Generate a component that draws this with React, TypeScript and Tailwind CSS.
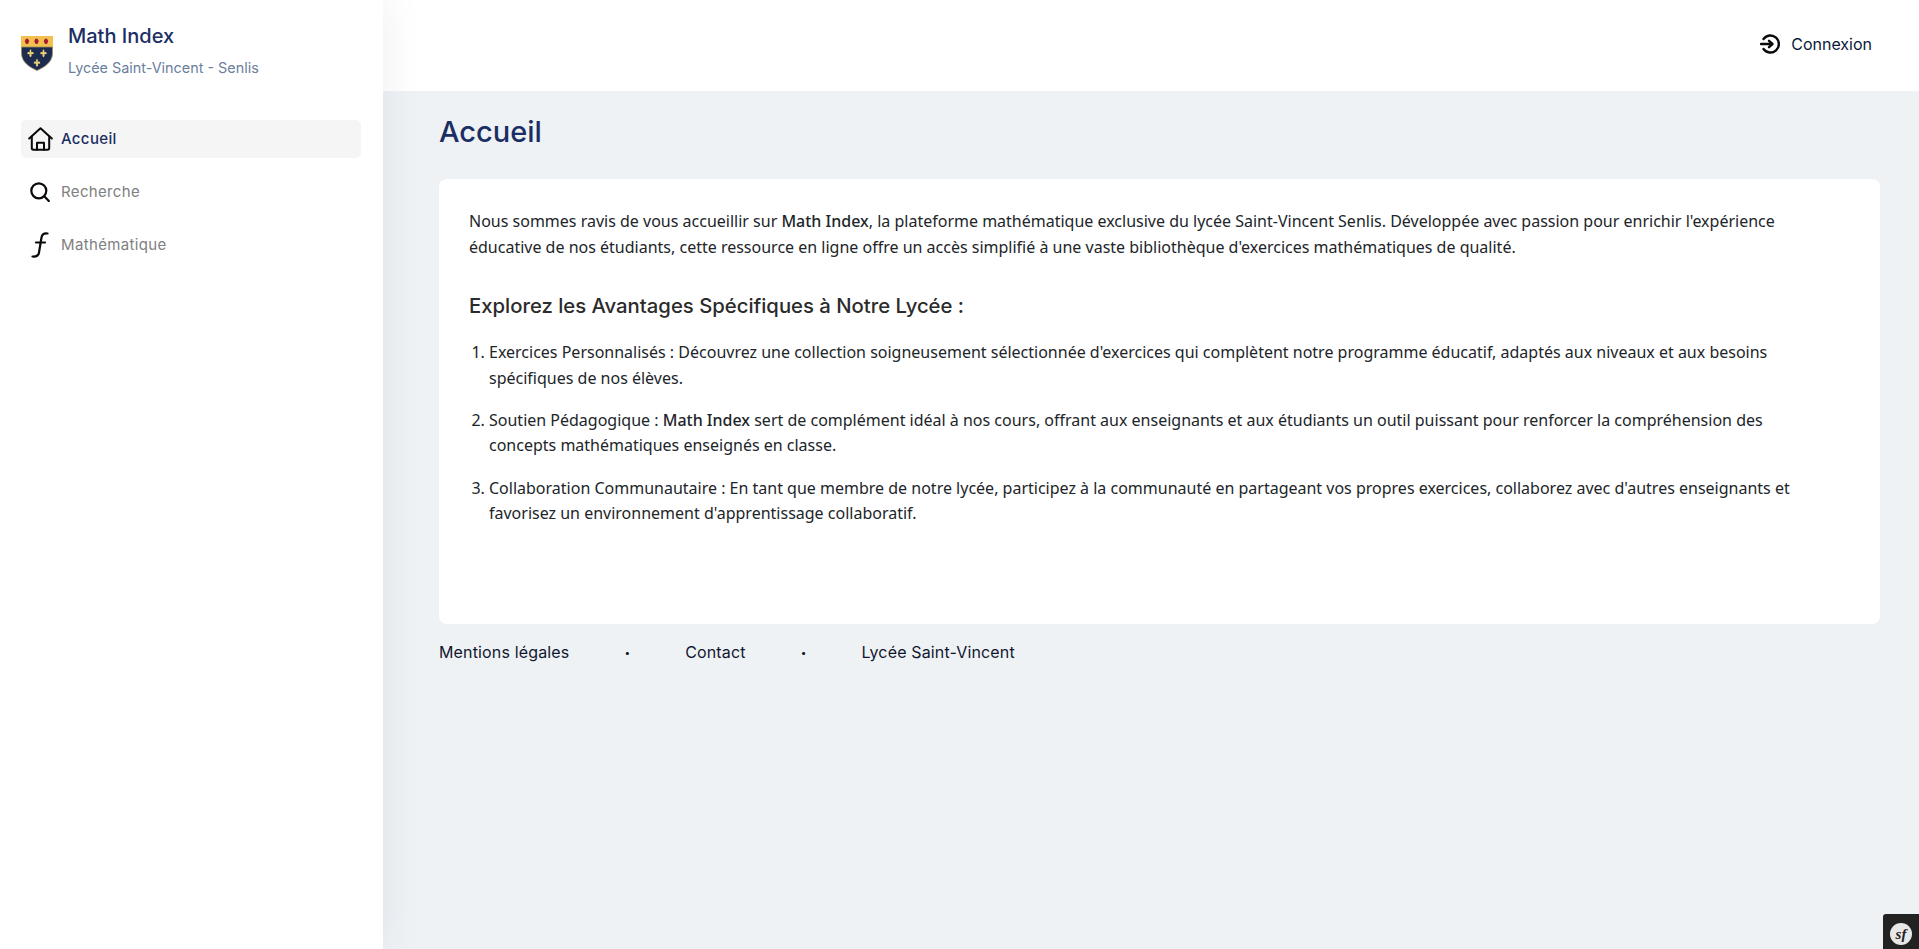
import type { ReactNode } from 'react';

const ui = "font-['Inter','Liberation_Sans',sans-serif]";

function Crest() {
  const lis = 'M0 -4.2C1 -3 1.2 -2.2 0.6 -1.1C1.6 -1.9 3 -1.6 3.2 -0.3C3.3 0.6 2.4 1 1.7 0.6L0.8 1.1L1.2 2.6L0 3.8L-1.2 2.6L-0.8 1.1L-1.7 0.6C-2.4 1 -3.3 0.6 -3.2 -0.3C-3 -1.6 -1.6 -1.9 -0.6 -1.1C-1.2 -2.2 -1 -3 0 -4.2Z';
  return (
    <svg width="32" height="35" viewBox="0 0 32 35" className="mt-[16px] shrink-0">
      <path d="M0 0H32V11H0Z" fill="#f3c04f" />
      <path d="M0.5 11H31.5V17C31.5 26 24 31 16 34.5C8 31 0.5 26 0.5 17Z" fill="#1d2b4f" stroke="#a08d55" strokeWidth="0.8" />
      <g fill="#a5182e">
        <path d="M6 2.5a1.6 1.6 0 0 1 1.6 1.6a1.6 1.6 0 0 1 0 2.4a1.6 1.6 0 0 1-3.2 0a1.6 1.6 0 0 1 0-2.4a1.6 1.6 0 0 1 1.6-1.6Z" />
        <path d="M15.5 2.5a1.6 1.6 0 0 1 1.6 1.6a1.6 1.6 0 0 1 0 2.4a1.6 1.6 0 0 1-3.2 0a1.6 1.6 0 0 1 0-2.4a1.6 1.6 0 0 1 1.6-1.6Z" />
        <path d="M25 2.5a1.6 1.6 0 0 1 1.6 1.6a1.6 1.6 0 0 1 0 2.4a1.6 1.6 0 0 1-3.2 0a1.6 1.6 0 0 1 0-2.4a1.6 1.6 0 0 1 1.6-1.6Z" />
      </g>
      <g fill="#e8cf7a">
        <path transform="translate(9.5 17.5)" d={lis} />
        <path transform="translate(22.5 17.5)" d={lis} />
        <path transform="translate(16 27)" d={lis} />
      </g>
    </svg>
  );
}

function HomeIcon() {
  return (
    <svg width="25" height="24" viewBox="0 0 25 24" fill="none" stroke="#0a0a0a" strokeWidth="2" strokeLinejoin="round" strokeLinecap="round">
      <path d="M1.2 11.5L12.5 1.2L23.8 11.5" />
      <path d="M3.8 9.5V21C3.8 22.2 4.4 22.8 5.5 22.8H19.5C20.6 22.8 21.2 22.2 21.2 21V9.5" />
      <path d="M9 22.8V15.8H16V22.8" />
    </svg>
  );
}

function SearchIcon() {
  return (
    <svg width="20" height="20" viewBox="0 0 20 20" fill="none" stroke="#0a0a0a" strokeWidth="2.2" strokeLinecap="round">
      <circle cx="8.8" cy="8.8" r="7.5" />
      <path d="M14.5 14.5L18.8 19" />
    </svg>
  );
}

function FunctionIcon() {
  return (
    <svg width="18" height="26" viewBox="0 0 18 26" fill="none" stroke="#0a0a0a" strokeWidth="2.2" strokeLinecap="round">
      <path d="M16.5 1.5C12.5 1 11 2.5 10.5 5.5L8 20.5C7.5 24 5.5 25 1.5 24.5" />
      <path d="M5 10.5H14" />
    </svg>
  );
}

function NavItem({ icon, label, active }: { icon: ReactNode; label: string; active?: boolean }) {
  return (
    <a className={`flex h-[38px] items-center rounded-[5px] ${active ? 'bg-[#f5f5f5]' : ''}`}>
      <span className="mr-[2px] flex w-[38px] shrink-0 items-center justify-center">{icon}</span>
      <span className={`pt-[1px] text-[15px] tracking-[0.35px] ${ui} ${active ? 'font-medium text-[#1b2e63]' : 'text-[#808080]'}`}>{label}</span>
    </a>
  );
}

export default function App() {
  return (
    <div className="flex min-h-[949px] bg-[#eff2f5] font-['Noto_Sans',sans-serif]">
      <aside className="relative z-10 w-[383px] shrink-0 bg-white shadow-[0_0_40px_rgba(30,40,70,0.08)]">
        <div className="flex items-start gap-[15px] pl-[21px] pt-[20px]">
          <Crest />
          <div>
            <div className={`pt-[1px] text-[20px] font-medium leading-[30px] text-[#1b2e63] ${ui}`}>Math Index</div>
            <div className={`mt-[5px] text-[14.4px] leading-[24px] text-[#6b7f9e] ${ui}`}>Lycée Saint-Vincent - Senlis</div>
          </div>
        </div>
        <nav className="mt-[40px] flex flex-col gap-[15px] pl-[21px] pr-[22px]">
          <NavItem icon={<HomeIcon />} label="Accueil" active />
          <NavItem icon={<SearchIcon />} label="Recherche" />
          <NavItem icon={<FunctionIcon />} label="Mathématique" />
        </nav>
      </aside>

      <div className="flex min-w-0 flex-1 flex-col">
        <header className="flex h-[91px] items-center justify-end bg-white pr-[47px]">
          <div className="flex items-center gap-[11px] pb-[4px]">
            <svg width="20" height="20" viewBox="0 0 20 20" fill="none" stroke="#0a0a0a" strokeWidth="2.4" strokeLinecap="round" strokeLinejoin="round">
              <path d="M3.5 5A8.5 8.5 0 1 1 3.5 15" />
              <path d="M1 10H12" />
              <path d="M9 6.8L12.5 10L9 13.2" />
            </svg>
            <span className={`text-[16px] text-[#0a1a3a] ${ui}`}>Connexion</span>
          </div>
        </header>

        <main className="pl-[56px] pr-[39px]">
          <h1 className={`mt-[23px] text-[29px] font-medium leading-[36px] text-[#1b2e63] ${ui}`}>Accueil</h1>
          <section className="mt-[29px] h-[445px] rounded-[8px] bg-white pl-[30px] pr-[70px] pt-[30px] text-[16px] leading-[25.6px] text-[#212529]">
            <p>
              Nous sommes ravis de vous accueillir sur <strong className="font-medium">Math Index</strong>, la plateforme mathématique exclusive du lycée Saint-Vincent Senlis. Développée avec passion pour enrichir l'expérience éducative de nos étudiants, cette ressource en ligne offre un accès simplifié à une vaste bibliothèque d'exercices mathématiques de qualité.
            </p>
            <h2 className={`mt-[31px] text-[20.3px] font-medium leading-[30px] text-[#2b2b2b] ${ui}`}>Explorez les Avantages Spécifiques à Notre Lycée :</h2>
            <ol className="mt-[19px] list-decimal pl-[20px]">
              <li className="mb-[16.5px]">Exercices Personnalisés : Découvrez une collection soigneusement sélectionnée d'exercices qui complètent notre programme éducatif, adaptés aux niveaux et aux besoins spécifiques de nos élèves.</li>
              <li className="mb-[16.5px]">Soutien Pédagogique : <strong className="font-medium">Math Index</strong> sert de complément idéal à nos cours, offrant aux enseignants et aux étudiants un outil puissant pour renforcer la compréhension des concepts mathématiques enseignés en classe.</li>
              <li>Collaboration Communautaire : En tant que membre de notre lycée, participez à la communauté en partageant vos propres exercices, collaborez avec d'autres enseignants et favorisez un environnement d'apprentissage collaboratif.</li>
            </ol>
          </section>
          <footer className={`mt-[17px] flex items-center text-[16px] leading-[22px] tracking-[0.15px] text-[#0f1730] ${ui}`}>
            <span>Mentions légales</span>
            <span className="mx-[55px] text-[10px]">•</span>
            <span>Contact</span>
            <span className="mx-[55px] text-[10px]">•</span>
            <span>Lycée Saint-Vincent</span>
          </footer>
        </main>
      </div>

      <div className="fixed bottom-0 right-0 z-20 flex h-[35px] w-[36px] items-start justify-center rounded-tl-[3px] bg-[#222222] pt-[9px]">
        <div className="flex h-[22px] w-[22px] shrink-0 items-center justify-center rounded-full bg-[#e8e8e8] font-['Liberation_Serif',serif] text-[15px] italic font-bold leading-none text-[#222222]">sf</div>
      </div>
    </div>
  );
}
